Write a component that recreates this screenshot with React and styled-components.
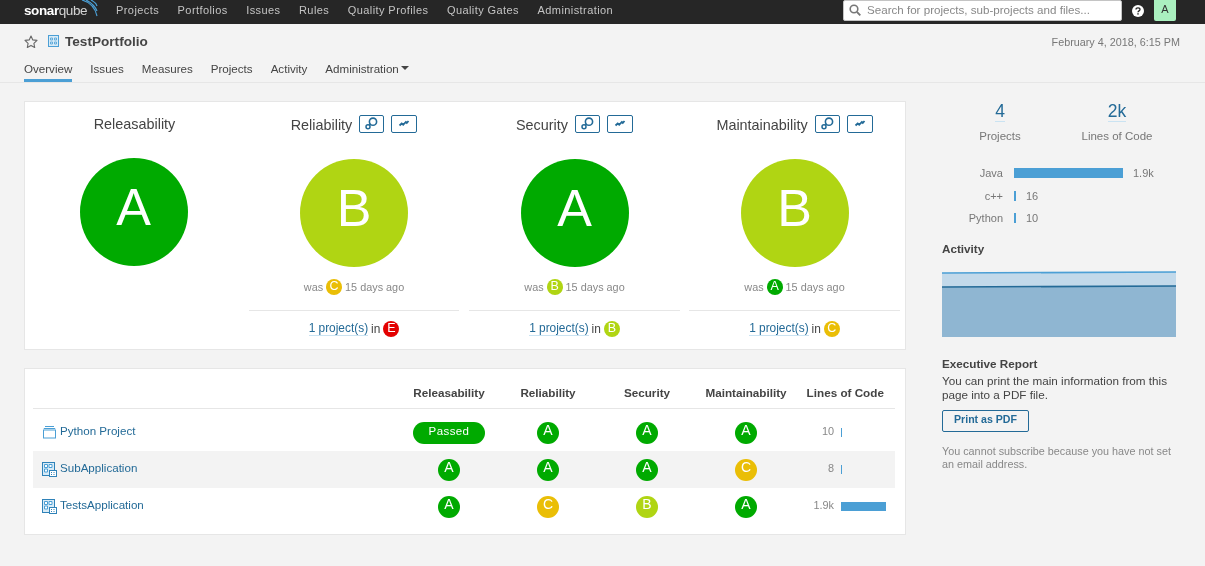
import React from 'react';
import styled, { createGlobalStyle } from 'styled-components';

const Global = createGlobalStyle`
  html, body { margin: 0; padding: 0; background: #f3f3f3; }
  body {
    font-family: "Liberation Sans", Arial, sans-serif;
    font-size: 12px;
    color: #444;
    width: 1205px;
    height: 566px;
    overflow: hidden;
  }
  #root { will-change: transform; }
  * { box-sizing: border-box; }
`;

const RATING = { A: '#00aa00', B: '#b0d513', C: '#eabe06', E: '#e30000' };

const TopBar = styled.div`
  height: 24px;
  background: #262626;
  display: flex;
  align-items: flex-start;
  padding-left: 24px;
`;
const Logo = styled.div`
  width: 74px;
  height: 24px;
  position: relative;
  color: #fff;
  font-size: 13.5px;
  line-height: 21px;
  letter-spacing: -0.4px;
  b { font-weight: 700; }
  span { font-weight: 400; opacity: 0.8; }
  svg { position: absolute; left: 46px; top: 0; }
`;
const TopNav = styled.nav`
  display: flex;
  gap: 18.5px;
  margin-left: 18px;
  height: 19px;
  align-items: center;
`;
const TopLink = styled.span`
  color: #c4c4c4;
  font-size: 11px;
  letter-spacing: 0.42px;
`;
const TopRight = styled.div`
  margin-left: auto;
  display: flex;
  align-items: flex-start;
  padding-right: 29px;
`;
const Search = styled.div`
  width: 279px;
  height: 21px;
  background: #fff;
  border: 1px solid #c4c4c4;
  border-radius: 2px;
  display: flex;
  align-items: center;
  padding: 0 0 2px 5px;
  color: #888;
  font-size: 11.6px;
  gap: 6px;
`;
const Help = styled.div`
  margin: 5px 0 0 10px;
  svg { display: block; }
`;
const Avatar = styled.div`
  width: 22px;
  height: 21px;
  margin-left: 10px;
  background: #aaf0bf;
  border-radius: 0 0 2px 2px;
  color: #333;
  font-size: 11px;
  text-align: center;
  line-height: 19px;
`;

const SubHeader = styled.header`
  height: 59px;
  border-bottom: 1px solid #e6e6e6;
  padding: 0 25px 0 24px;
  display: flex;
  flex-direction: column;
`;
const TitleRow = styled.div`
  display: flex;
  align-items: center;
  height: 35px;
`;
const Title = styled.h1`
  margin: 0 0 0 5px;
  font-size: 13.6px;
  font-weight: 700;
  color: #444;
`;
const Stamp = styled.span`
  margin-left: auto;
  font-size: 10.8px;
  color: #777;
`;
const Tabs = styled.div`
  display: flex;
  gap: 18px;
  height: 23px;
`;
const Tab = styled.div`
  font-size: 11.6px;
  color: #444;
  padding-top: 3px;
  height: 23px;
  border-bottom: ${p => (p.$active ? '3px solid #4b9fd5' : 'none')};
  display: flex;
  gap: 2px;
  align-items: flex-start;
`;
const Caret = styled.i`
  width: 0;
  height: 0;
  margin-top: 4px;
  border-left: 4px solid transparent;
  border-right: 4px solid transparent;
  border-top: 4px solid #444;
`;

const Main = styled.main`
  display: flex;
  padding: 18px 29px 0 24px;
  align-items: flex-start;
`;
const Left = styled.div`
  width: 882px;
  display: flex;
  flex-direction: column;
  gap: 18px;
`;
const Card = styled.section`
  background: #fff;
  border: 1px solid #e6e6e6;
`;
const Ratings = styled(Card)`
  height: 249px;
  display: grid;
  grid-template-columns: 219px 220px 221px 220px;
`;
const RatingCol = styled.div`
  display: flex;
  flex-direction: column;
  align-items: center;
  padding: ${p => (p.$first ? '0' : `0 5px 0 ${p.$pl || 5}px`)};
`;
const ColHead = styled.div`
  height: 56px;
  display: flex;
  align-items: flex-start;
  justify-content: center;
  gap: 7px;
  font-size: 14.4px;
  color: #444;
  padding-top: ${p => (p.$first ? '14px' : '13px')};
  line-height: ${p => (p.$first ? '16px' : '20px')};
`;
const IconBtn = styled.span`
  width: ${p => p.$w}px;
  height: 18px;
  border: 1px solid #236a97;
  border-radius: 2px;
  display: inline-flex;
  align-items: center;
  justify-content: center;
  svg { display: block; }
`;
const BigRating = styled.div`
  width: 108px;
  height: 108px;
  border-radius: 50%;
  background: ${p => RATING[p.$r]};
  color: #fff;
  font-size: 52px;
  line-height: 98px;
  text-align: center;
  flex-shrink: 0;
  margin-top: ${p => (p.$first ? '0' : '1px')};
  position: relative;
  left: ${p => (p.$first ? '-1px' : '0')};
`;
const Was = styled.div`
  margin-top: 10px;
  height: 20px;
  display: flex;
  align-items: center;
  gap: 3px;
  color: #888;
  font-size: 10.85px;
`;
const Worst = styled.div`
  align-self: stretch;
  margin-top: 13px;
  border-top: 1px solid #e6e6e6;
  height: 36px;
  display: flex;
  align-items: center;
  justify-content: center;
  gap: 3px;
  font-size: 11.9px;
  color: #444;
`;
const Link = styled.a`
  color: #236a97;
  border-bottom: 1px solid #cae3f2;
  line-height: 13px;
`;
const Badge = styled.span`
  width: ${p => p.$s || 16}px;
  height: ${p => p.$s || 16}px;
  border-radius: 50%;
  background: ${p => RATING[p.$r]};
  color: #fff;
  display: inline-block;
  text-align: center;
  font-size: ${p => (p.$s ? 14 : 12.5)}px;
  line-height: ${p => (p.$s ? 16 : 14)}px;
  flex-shrink: 0;
`;

const TableCard = styled(Card)`
  height: 167px;
  padding: 8px 10px 0 8px;
`;
const cols = '366.5px 99px 99px 99px 99px 99.5px';
const HeadRow = styled.div`
  display: grid;
  grid-template-columns: ${cols};
  height: 32px;
  margin-bottom: 5px;
  border-bottom: 1px solid #e6e6e6;
  align-items: center;
  font-weight: 700;
  font-size: 11.7px;
  color: #444;
  text-align: center;
`;
const Row = styled.div`
  display: grid;
  grid-template-columns: ${cols};
  height: 37px;
  align-items: center;
  background: ${p => (p.$alt ? '#f3f3f3' : 'transparent')};
  text-align: center;
`;
const NameCell = styled.div`
  display: flex;
  align-items: center;
  text-align: left;
  padding-left: 9px;
  gap: 3px;
  font-size: 11.6px;
  color: #236a97;
  position: relative;
  top: -2px;
  svg { flex-shrink: 0; position: relative; top: 2px; }
`;
const RatingCell = styled.div`
  display: flex;
  justify-content: center;
`;
const Passed = styled.span`
  width: 72px;
  height: 22px;
  border-radius: 11px;
  background: #00aa00;
  color: #fff;
  font-size: 11.5px;
  line-height: 19px;
  letter-spacing: 0.4px;
`;
const LocCell = styled.div`
  display: flex;
  align-items: center;
  justify-content: flex-end;
  padding-right: 9px;
  font-size: 10.9px;
  color: #888;
  position: relative;
  top: -2px;
`;
const LocValue = styled.span`
  margin-right: 7px;
`;
const LocBarTrack = styled.div`
  width: 45px;
  height: 10px;
  position: relative;
  top: 2px;
`;
const Bar = styled.div`
  height: ${p => p.$h}px;
  background: #4b9fd5;
`;

const Side = styled.aside`
  width: 234px;
  margin-left: 36px;
`;
const Stats = styled.div`
  display: grid;
  grid-template-columns: 116px 118px;
  text-align: center;
  padding-top: 1px;
`;
const StatNum = styled.a`
  color: #236a97;
  font-size: 17.5px;
  line-height: 19px;
  border-bottom: 1px solid #cae3f2;
  display: inline-block;
`;
const StatLabel = styled.div`
  margin-top: 8px;
  font-size: 11.5px;
  color: #777;
`;
const Langs = styled.div`
  margin-top: 25px;
  display: flex;
  flex-direction: column;
  gap: 12.5px;
`;
const LangRow = styled.div`
  display: grid;
  grid-template-columns: 61px auto;
  gap: 11px;
  height: 10px;
  align-items: center;
  font-size: 11px;
  color: #777;
  justify-content: start;
`;
const LangName = styled.span`
  text-align: right;
`;
const LangBar = styled.div`
  display: flex;
  align-items: center;
  gap: 10px;
`;
const SideTitle = styled.h3`
  margin: 0;
  font-size: 11.7px;
  font-weight: 700;
  color: #444;
`;
const Activity = styled.div`
  margin-top: 20px;
`;
const Chart = styled.svg`
  display: block;
  margin-top: 15px;
`;
const Report = styled.div`
  margin-top: 20px;
  font-size: 11.7px;
  line-height: 14px;
`;
const ReportText = styled.p`
  margin: 3px 0 0;
  color: #444;
`;
const PrintBtn = styled.button`
  display: block;
  width: 87px;
  height: 22px;
  margin-top: 8px;
  padding: 0 0 4px;
  background: transparent;
  border: 1px solid #236a97;
  border-radius: 2px;
  color: #236a97;
  font: 700 10.6px "Liberation Sans", Arial, sans-serif;
`;
const Note = styled.p`
  margin: 13px 0 0;
  color: #888;
  font-size: 10.8px;
  line-height: 13px;
`;

const Star = () => (
  <svg width="14" height="14" viewBox="0 0 14 14">
    <path d="M7 1l1.8 3.9 4.2.5-3.1 2.9.8 4.2L7 10.4 3.3 12.5l.8-4.2L1 5.4l4.2-.5z" fill="none" stroke="#666" strokeWidth="1.1" strokeLinejoin="round" />
  </svg>
);
const PortfolioIcon = () => (
  <svg width="12" height="13" viewBox="0 0 12 13" style={{ marginLeft: 10 }}>
    <rect x="0.5" y="0.5" width="10" height="11" fill="#d8ebf7" stroke="#4b9fd5" />
    <path d="M2.5 3h2v2h-2zM6.5 3h2v2h-2zM2.5 7h2v2h-2zM6.5 7h2v2h-2z" fill="none" stroke="#4b9fd5" strokeWidth="0.8" />
  </svg>
);
const AppIcon = () => (
  <svg width="15" height="15" viewBox="0 0 15 15">
    <rect x="0.5" y="0.5" width="12" height="13" fill="#d8ebf7" stroke="#2f82b8" />
    <path d="M2.5 2.5h3v3h-3zM7 2.5h3v3H7zM2.5 7h3v3h-3z" fill="#fff" stroke="#4b9fd5" />
    <rect x="7.5" y="8.5" width="7" height="6" fill="#fff" stroke="#2f82b8" />
    <path d="M9 10.5h1M11.5 10.5h1M9 12.5h1M11.5 12.5h1" stroke="#2f82b8" />
  </svg>
);
const ProjectIcon = () => (
  <svg width="15" height="15" viewBox="0 0 15 15">
    <path d="M3 1.5h9M1.8 3.5h11.4" stroke="#4b9fd5" fill="none" />
    <rect x="1.5" y="5" width="12" height="8" fill="#fff" stroke="#4b9fd5" />
  </svg>
);
const MagIcon = () => (
  <svg width="17" height="14" viewBox="0 0 17 14">
    <circle cx="10" cy="4.7" r="3.6" fill="none" stroke="#236a97" strokeWidth="1.6" />
    <circle cx="5" cy="9.7" r="2" fill="none" stroke="#236a97" strokeWidth="1.5" />
    <path d="M7.6 7.2L6.3 8.4" stroke="#236a97" strokeWidth="1.6" />
  </svg>
);
const TrendIcon = () => (
  <svg width="12" height="12" viewBox="0 0 12 12">
    <path d="M1.5 7.5l2.2-2 1.5 1.3L7.8 4l1 1 1.7-2" fill="none" stroke="#236a97" strokeWidth="1.8" />
  </svg>
);

const ratingCols = [
  { name: 'Releasability', r: 'A', first: true },
  { name: 'Reliability', r: 'B', was: 'C', worst: 'E', w: 25 },
  { name: 'Security', r: 'A', was: 'B', worst: 'B', w: 25 },
  { name: 'Maintainability', r: 'B', was: 'A', worst: 'C', w: 25, pl: 4 },
];

const rows = [
  { name: 'Python Project', icon: <ProjectIcon />, rel: null, a: 'A', b: 'A', c: 'A', loc: '10', bar: 1 },
  { name: 'SubApplication', icon: <AppIcon />, rel: 'A', a: 'A', b: 'A', c: 'C', loc: '8', bar: 1, alt: true },
  { name: 'TestsApplication', icon: <AppIcon />, rel: 'A', a: 'C', b: 'B', c: 'A', loc: '1.9k', bar: 45 },
];

const langs = [
  { name: 'Java', w: 109, v: '1.9k' },
  { name: 'c++', w: 2, v: '16' },
  { name: 'Python', w: 2, v: '10' },
];

export default function App() {
  return (
    <>
      <Global />
      <TopBar>
        <Logo>
          <b>sonar</b><span>qube</span>
          <svg width="28" height="18" viewBox="0 0 28 18">
            <path d="M12 0c7 2 13 7 15 16M16 0c4 2 9 6 11 11M21 0c2 1 5 3 6 6" fill="none" stroke="#4b9fd5" strokeWidth="1.2" />
          </svg>
        </Logo>
        <TopNav>
          {['Projects', 'Portfolios', 'Issues', 'Rules', 'Quality Profiles', 'Quality Gates', 'Administration'].map(t => (
            <TopLink key={t}>{t}</TopLink>
          ))}
        </TopNav>
        <TopRight>
          <Search>
            <svg width="12" height="12" viewBox="0 0 12 12">
              <circle cx="5" cy="5" r="3.8" fill="none" stroke="#777" strokeWidth="1.6" />
              <path d="M8 8l3.3 3.3" stroke="#777" strokeWidth="1.8" />
            </svg>
            Search for projects, sub-projects and files...
          </Search>
          <Help>
            <svg width="12" height="12" viewBox="0 0 12 12">
              <circle cx="6" cy="6" r="6" fill="#fff" />
              <path d="M4 4.6c0-1 .9-1.7 2-1.7s2 .7 2 1.6c0 1.5-2 1.3-2 2.8" fill="none" stroke="#262626" strokeWidth="1.3" />
              <rect x="5.3" y="8.2" width="1.4" height="1.4" fill="#262626" />
            </svg>
          </Help>
          <Avatar>A</Avatar>
        </TopRight>
      </TopBar>
      <SubHeader>
        <TitleRow>
          <Star />
          <PortfolioIcon />
          <Title>TestPortfolio</Title>
          <Stamp>February 4, 2018, 6:15 PM</Stamp>
        </TitleRow>
        <Tabs>
          <Tab $active>Overview</Tab>
          <Tab>Issues</Tab>
          <Tab>Measures</Tab>
          <Tab>Projects</Tab>
          <Tab>Activity</Tab>
          <Tab>Administration<Caret /></Tab>
        </Tabs>
      </SubHeader>
      <Main>
        <Left>
          <Ratings>
            {ratingCols.map(c => (
              <RatingCol key={c.name} $first={c.first} $pl={c.pl}>
                <ColHead $first={c.first}>
                  <span>{c.name}</span>
                  {!c.first && <IconBtn $w={c.w}><MagIcon /></IconBtn>}
                  {!c.first && <IconBtn $w={c.w + 1}><TrendIcon /></IconBtn>}
                </ColHead>
                <BigRating $r={c.r} $first={c.first}>{c.r}</BigRating>
                {!c.first && (
                  <>
                    <Was>was <Badge $r={c.was}>{c.was}</Badge> 15 days ago</Was>
                    <Worst>
                      <Link>1 project(s)</Link> in <Badge $r={c.worst}>{c.worst}</Badge>
                    </Worst>
                  </>
                )}
              </RatingCol>
            ))}
          </Ratings>
          <TableCard>
            <HeadRow>
              <span />
              <span>Releasability</span>
              <span>Reliability</span>
              <span>Security</span>
              <span>Maintainability</span>
              <span>Lines of Code</span>
            </HeadRow>
            {rows.map(r => (
              <Row key={r.name} $alt={r.alt}>
                <NameCell>{r.icon}{r.name}</NameCell>
                <RatingCell>
                  {r.rel ? <Badge $s={22} $r={r.rel}>{r.rel}</Badge> : <Passed>Passed</Passed>}
                </RatingCell>
                <RatingCell><Badge $s={22} $r={r.a}>{r.a}</Badge></RatingCell>
                <RatingCell><Badge $s={22} $r={r.b}>{r.b}</Badge></RatingCell>
                <RatingCell><Badge $s={22} $r={r.c}>{r.c}</Badge></RatingCell>
                <LocCell>
                  <LocValue>{r.loc}</LocValue>
                  <LocBarTrack>
                    <Bar $h={9} style={{ width: r.bar }} />
                  </LocBarTrack>
                </LocCell>
              </Row>
            ))}
          </TableCard>
        </Left>
        <Side>
          <Stats>
            <div>
              <StatNum>4</StatNum>
              <StatLabel>Projects</StatLabel>
            </div>
            <div>
              <StatNum>2k</StatNum>
              <StatLabel>Lines of Code</StatLabel>
            </div>
          </Stats>
          <Langs>
            {langs.map(l => (
              <LangRow key={l.name}>
                <LangName>{l.name}</LangName>
                <LangBar>
                  <Bar $h={10} style={{ width: l.w }} />
                  {l.v}
                </LangBar>
              </LangRow>
            ))}
          </Langs>
          <Activity>
            <SideTitle>Activity</SideTitle>
            <Chart width="234" height="67" viewBox="0 0 234 67">
              <path d="M0 3L234 2V67H0z" fill="#c2d9ea" />
              <path d="M0 17L234 16V67H0z" fill="#8fb6d2" />
              <path d="M0 3L234 2" stroke="#4b9fd5" strokeWidth="1.6" fill="none" />
              <path d="M0 17L234 16" stroke="#236a97" strokeWidth="1.6" fill="none" />
            </Chart>
          </Activity>
          <Report>
            <SideTitle>Executive Report</SideTitle>
            <ReportText>You can print the main information from this page into a PDF file.</ReportText>
            <PrintBtn>Print as PDF</PrintBtn>
            <Note>You cannot subscribe because you have not set an email address.</Note>
          </Report>
        </Side>
      </Main>
    </>
  );
}
